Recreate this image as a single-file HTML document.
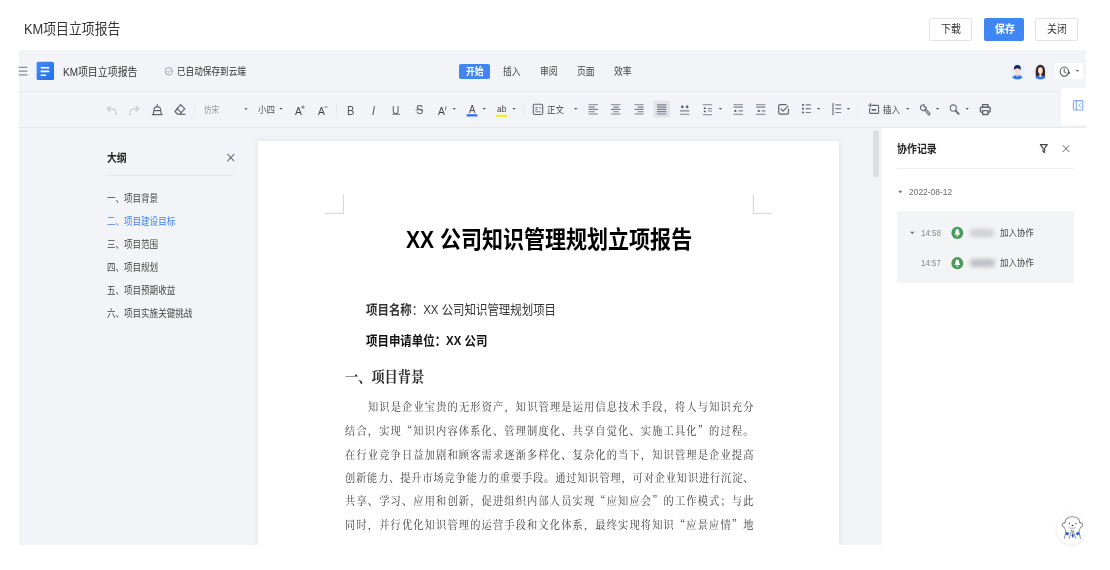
<!DOCTYPE html>
<html lang="zh-CN"><head><meta charset="utf-8"><title>KM项目立项报告</title>
<style>
html,body{margin:0;padding:0}
body{width:1110px;height:570px;position:relative;overflow:hidden;background:#fff;font-family:"Liberation Sans","Noto Sans CJK SC",sans-serif}
.a{position:absolute}
.t{position:absolute;white-space:nowrap;line-height:24px;height:24px;transform-origin:0 50%;transform:scaleX(0.88)}
svg.ic{position:absolute;left:0;top:0}
</style></head><body>
<div class="t" style="left:24.4px;top:17.0px;font-size:14.6px;color:#333;">KM项目立项报告</div>
<div class="a" style="left:929.1px;top:18px;width:43.3px;height:22.8px;background:#fff;border:1px solid #e1e3e6;box-sizing:border-box;border-radius:2px;"></div>
<div class="t" style="left:941.2px;top:17.3px;font-size:11.3px;color:#333;">下载</div>
<div class="a" style="left:983.5px;top:18px;width:40.9px;height:22.8px;background:#3f86f2;border-radius:2px;"></div>
<div class="t" style="left:994.5px;top:17.3px;font-size:11.3px;color:#fff;font-weight:700;">保存</div>
<div class="a" style="left:1035.2px;top:18px;width:43.1px;height:22.8px;background:#fff;border:1px solid #e1e3e6;box-sizing:border-box;border-radius:2px;"></div>
<div class="t" style="left:1047.2px;top:17.3px;font-size:11.3px;color:#333;">关闭</div>
<div class="a" style="left:19px;top:50px;width:1066.6px;height:495.0px;background:#f3f4f7;"></div>
<div class="a" style="left:19px;top:91px;width:1066.6px;height:1.0px;background:#e9eaee;"></div>
<div class="a" style="left:19px;top:126.7px;width:1066.6px;height:1.0px;background:#e8e9ed;"></div>
<div class="t" style="left:62.5px;top:59.7px;font-size:11.3px;color:#333;">KM项目立项报告</div>
<div class="t" style="left:176.7px;top:59.7px;font-size:9.8px;color:#333;">已自动保存到云端</div>
<div class="a" style="left:458.8px;top:64px;width:31.6px;height:14.8px;background:#3f86f2;border-radius:2px;"></div>
<div class="t" style="left:466px;top:59.8px;font-size:10px;color:#fff;font-weight:700;">开始</div>
<div class="t" style="left:502.5px;top:59.8px;font-size:10px;color:#444;">插入</div>
<div class="t" style="left:540px;top:59.8px;font-size:10px;color:#444;">审阅</div>
<div class="t" style="left:576.8px;top:59.8px;font-size:10px;color:#444;">页面</div>
<div class="t" style="left:613.6px;top:59.8px;font-size:10px;color:#444;">效率</div>
<div class="a" style="left:1055.3px;top:62.9px;width:27.3px;height:16.4px;background:#fff;border-radius:2px;"></div>
<div class="a" style="left:1060.8px;top:88px;width:24.8px;height:37.4px;background:#fff;border-radius:3px 0 0 3px;"></div>
<div class="t" style="left:204px;top:98.0px;font-size:8.6px;color:#999;">仿宋</div>
<div class="t" style="left:257.7px;top:98.0px;font-size:9.6px;color:#555;">小四</div>
<div class="t" style="left:295px;top:98.7px;font-size:11.8px;color:#444;">A</div>
<div class="t" style="left:317.6px;top:98.7px;font-size:11.8px;color:#444;">A</div>
<div class="t" style="left:347px;top:98.7px;font-size:12.5px;color:#555;">B</div>
<div class="t" style="left:372.4px;top:98.7px;font-size:12.5px;color:#555;"><i>I</i></div>
<div class="t" style="left:392.2px;top:98.3px;font-size:11.5px;color:#555;">U</div>
<div class="t" style="left:415.5px;top:98.3px;font-size:12.5px;color:#555;">S</div>
<div class="t" style="left:437.5px;top:98.7px;font-size:11.8px;color:#444;">A</div>
<div class="t" style="left:468.6px;top:97.0px;font-size:11px;color:#444;">A</div>
<div class="t" style="left:496.8px;top:96.6px;font-size:9.5px;color:#444;">ab</div>
<div class="t" style="left:547.3px;top:98.0px;font-size:9.6px;color:#444;">正文</div>
<div class="t" style="left:882.9px;top:98.0px;font-size:9.6px;color:#444;">插入</div>
<div class="t" style="left:107px;top:145.8px;font-size:11.2px;color:#222;font-weight:700;">大纲</div>
<div class="a" style="left:107px;top:174.6px;width:127.0px;height:0.8px;background:#e7e8ec;"></div>
<div class="t" style="left:107px;top:187.4px;font-size:9.7px;color:#444;">一、项目背景</div>
<div class="t" style="left:107px;top:210.3px;font-size:9.7px;color:#3f7ff0;">二、项目建设目标</div>
<div class="t" style="left:107px;top:233.2px;font-size:9.7px;color:#444;">三、项目范围</div>
<div class="t" style="left:107px;top:256.1px;font-size:9.7px;color:#444;">四、项目规划</div>
<div class="t" style="left:107px;top:279.0px;font-size:9.7px;color:#444;">五、项目预期收益</div>
<div class="t" style="left:107px;top:301.9px;font-size:9.7px;color:#444;">六、项目实施关键挑战</div>
<div class="a" style="left:257.7px;top:140.9px;width:581.6px;height:404.1px;background:#fff;box-shadow:0 0 7px rgba(20,30,60,.09);clip-path:inset(-10px -10px 0 -10px);"></div>
<div class="a" style="left:873.4px;top:130.3px;width:5.3px;height:46.9px;background:#dddee1;border-radius:3px;"></div>
<div class="a" style="left:881.8px;top:127.7px;width:203.8px;height:417.3px;background:#fff;"></div>
<div class="a" style="left:882px;top:545px;width:203.6px;height:25.0px;background:#fff;"></div>
<div class="t" style="left:405.6px;top:228.3px;font-size:23.9px;color:#000;font-weight:700;">XX 公司知识管理规划立项报告</div>
<div class="t" style="left:366.2px;top:297.5px;font-size:13px;color:#333;"><b>项目名称</b>：XX 公司知识管理规划项目</div>
<div class="t" style="left:366.2px;top:329.2px;font-size:13px;color:#111;font-weight:700;">项目申请单位：XX 公司</div>
<div class="t" style="left:344.5px;top:365.0px;font-size:15px;color:#2e2e2e;font-weight:700;font-family:'Liberation Serif','Noto Serif CJK SC',serif;">一、项目背景</div>
<div class="t" style="left:367.5px;top:393.7px;font-size:11.6px;color:#3c3c3c;font-family:'Noto Serif CJK SC',serif;width:438.1px;text-align:justify;text-align-last:justify;font-feature-settings:"fwid";">知识是企业宝贵的无形资产，知识管理是运用信息技术手段，将人与知识充分</div>
<div class="t" style="left:344.6px;top:417.8px;font-size:11.6px;color:#3c3c3c;font-family:'Noto Serif CJK SC',serif;width:464.1px;text-align:justify;text-align-last:justify;font-feature-settings:"fwid";">结合，实现“知识内容体系化、管理制度化、共享自觉化、实施工具化”的过程。</div>
<div class="t" style="left:344.6px;top:441.5px;font-size:11.6px;color:#3c3c3c;font-family:'Noto Serif CJK SC',serif;width:464.1px;text-align:justify;text-align-last:justify;font-feature-settings:"fwid";">在行业竞争日益加剧和顾客需求逐渐多样化、复杂化的当下，知识管理是企业提高</div>
<div class="t" style="left:344.6px;top:464.9px;font-size:11.6px;color:#3c3c3c;font-family:'Noto Serif CJK SC',serif;width:464.1px;text-align:justify;text-align-last:justify;font-feature-settings:"fwid";">创新能力、提升市场竞争能力的重要手段。通过知识管理，可对企业知识进行沉淀、</div>
<div class="t" style="left:344.6px;top:488.4px;font-size:11.6px;color:#3c3c3c;font-family:'Noto Serif CJK SC',serif;width:464.1px;text-align:justify;text-align-last:justify;font-feature-settings:"fwid";">共享、学习、应用和创新，促进组织内部人员实现“应知应会”的工作模式；与此</div>
<div class="t" style="left:344.6px;top:512.0px;font-size:11.6px;color:#3c3c3c;font-family:'Noto Serif CJK SC',serif;width:464.1px;text-align:justify;text-align-last:justify;font-feature-settings:"fwid";">同时，并行优化知识管理的运营手段和文化体系，最终实现将知识“应景应情”地</div>
<div class="t" style="left:896.8px;top:136.7px;font-size:11.3px;color:#222;font-weight:700;">协作记录</div>
<div class="a" style="left:896.8px;top:168px;width:176.9px;height:0.8px;background:#ebecef;"></div>
<div class="t" style="left:908.8px;top:180.0px;font-size:9.6px;color:#6b6b6b;">2022-08-12</div>
<div class="a" style="left:896.8px;top:210.9px;width:176.9px;height:72.0px;background:#f3f4f6;"></div>
<div class="t" style="left:921.4px;top:221.0px;font-size:9px;color:#8a8a8a;">14:58</div>
<div class="t" style="left:921.4px;top:251.2px;font-size:9px;color:#8a8a8a;">14:57</div>
<div class="t" style="left:1000.4px;top:221.0px;font-size:9.6px;color:#444;">加入协作</div>
<div class="t" style="left:1000.4px;top:251.2px;font-size:9.6px;color:#444;">加入协作</div>
<div class="a" style="left:970px;top:229px;width:24px;height:8px;background:#cdd0d4;filter:blur(2px);border-radius:3px"></div>
<div class="a" style="left:970px;top:259.2px;width:25px;height:8px;background:#bcbfc4;filter:blur(2px);border-radius:3px"></div>
<svg class="ic" width="1110" height="570" viewBox="0 0 1110 570" fill="none" stroke-linecap="round" stroke-linejoin="round">
<path d="M19.2 67.3L27.0 67.3" stroke="#8a8e96" stroke-width="1.3"/>
<path d="M19.2 71.1L27.0 71.1" stroke="#8a8e96" stroke-width="1.3"/>
<path d="M19.2 74.9L27.0 74.9" stroke="#8a8e96" stroke-width="1.3"/>
<defs><linearGradient id="dg" x1="0" y1="0" x2="1" y2="1"><stop offset="0" stop-color="#3f8dfa"/><stop offset="1" stop-color="#1f6ff0"/></linearGradient></defs>
<rect x="36.6" y="61.7" width="17.4" height="18.3" rx="1.6" fill="url(#dg)" stroke="none" stroke-width="1"/>
<rect x="40.6" y="67.0" width="8.7" height="1.6" rx="0.5" fill="#fff" stroke="none" stroke-width="1"/>
<rect x="40.6" y="70.6" width="8.7" height="1.6" rx="0.5" fill="#fff" stroke="none" stroke-width="1"/>
<rect x="40.6" y="74.4" width="5.6" height="1.6" rx="0.5" fill="#fff" stroke="none" stroke-width="1"/>
<ellipse cx="168.7" cy="71.3" rx="3.6" ry="3.7" fill="none" stroke="#9fa3aa" stroke-width="1"/>
<path d="M167 71.400l1.300 1.300 2.200-2.600" stroke="#9fa3aa" stroke-width="1" fill="none" />
<path d="M110 106.4l-2.7 2.4 2.7 2.4M107.6 108.8h4.6a3.8 3.8 0 0 1 3.8 3.8v2.1" stroke="#c8cbd0" stroke-width="1.3" fill="none" />
<path d="M136 106.4l2.7 2.4-2.7 2.4M138.4 108.8h-4.6a3.8 3.8 0 0 0-3.8 3.8v2.1" stroke="#c8cbd0" stroke-width="1.3" fill="none" />
<path d="M157.3 104.5v2.3M154 110.6h6.600M152.400 114.600h9.800M153.300 114.400l.8-5.400q.3-2.200 2-2.200h2.400q1.700 0 2 2.200l.8 5.400" stroke="#62666d" stroke-width="1.2" fill="none" />
<path d="M180.6 104.6l4.2 4.3-5 5.2h-2.4l-2.4-2.6zM177 108.3l4.2 4.4M180.4 114.3h4.6" stroke="#62666d" stroke-width="1.2" fill="none" />
<path d="M194.6 104.3L194.6 115.6" stroke="#e6e8eb" stroke-width="1"/>
<path d="M244.4 108.2h3.2l-1.6 1.8z" fill="#4a4d52" stroke="none"/>
<path d="M279.4 108.0h3.2l-1.6 1.8z" fill="#4a4d52" stroke="none"/>
<path d="M303 105.8v2.6M301.7 107.1h2.6" stroke="#62666d" stroke-width="0.9" fill="none" />
<path d="M324.8 107.1h2.4" stroke="#62666d" stroke-width="0.9" fill="none" />
<path d="M336.7 104.3L336.7 115.6" stroke="#e6e8eb" stroke-width="1"/>
<path d="M393.0 114.2L399.5 114.2" stroke="#62666d" stroke-width="1"/>
<path d="M416.0 109.8L422.6 109.8" stroke="#62666d" stroke-width="0.9"/>
<path d="M446 106.6l-.5 3" stroke="#62666d" stroke-width="0.9" fill="none" />
<path d="M452.6 108.0h3.2l-1.6 1.8z" fill="#4a4d52" stroke="none"/>
<rect x="466.7" y="114.2" width="10.6" height="2.3" rx="0" fill="#3370ff" stroke="none" stroke-width="1"/>
<path d="M482.6 108.0h3.2l-1.6 1.8z" fill="#4a4d52" stroke="none"/>
<rect x="496.2" y="114.7" width="10.8" height="2.2" rx="0" fill="#f4f01a" stroke="none" stroke-width="1"/>
<path d="M512.5 108.0h3.2l-1.6 1.8z" fill="#4a4d52" stroke="none"/>
<path d="M523.6 104.3L523.6 115.6" stroke="#e6e8eb" stroke-width="1"/>
<rect x="533.3" y="104.3" width="9.4" height="10.2" rx="1.4" fill="none" stroke="#62666d" stroke-width="1.1"/>
<path d="M535.6 107.6h2M535.6 109.6h1.6M535.6 111.8h4.8M539.6 107.2l1.4 1.6" stroke="#62666d" stroke-width="0.9" fill="none" />
<path d="M574.2 108.0h3.2l-1.6 1.8z" fill="#4a4d52" stroke="none"/>
<path d="M589.0 104.8L597.6 104.8" stroke="#7d818a" stroke-width="1.1"/>
<path d="M589.0 107.1L594.4 107.1" stroke="#7d818a" stroke-width="1.1"/>
<path d="M589.0 109.4L597.6 109.4" stroke="#7d818a" stroke-width="1.1"/>
<path d="M589.0 111.7L594.4 111.7" stroke="#7d818a" stroke-width="1.1"/>
<path d="M589.0 114.0L597.6 114.0" stroke="#7d818a" stroke-width="1.1"/>
<path d="M611.5 104.8L620.0 104.8" stroke="#7d818a" stroke-width="1.1"/>
<path d="M613.8 107.1L618.3 107.1" stroke="#7d818a" stroke-width="1.1"/>
<path d="M611.5 109.4L620.0 109.4" stroke="#7d818a" stroke-width="1.1"/>
<path d="M613.8 111.7L618.3 111.7" stroke="#7d818a" stroke-width="1.1"/>
<path d="M611.5 114.0L620.0 114.0" stroke="#7d818a" stroke-width="1.1"/>
<path d="M635.0 104.8L643.2 104.8" stroke="#7d818a" stroke-width="1.1"/>
<path d="M638.1 107.1L643.2 107.1" stroke="#7d818a" stroke-width="1.1"/>
<path d="M635.0 109.4L643.2 109.4" stroke="#7d818a" stroke-width="1.1"/>
<path d="M638.1 111.7L643.2 111.7" stroke="#7d818a" stroke-width="1.1"/>
<path d="M635.0 114.0L643.2 114.0" stroke="#7d818a" stroke-width="1.1"/>
<rect x="653.4" y="100.4" width="16.7" height="17.2" rx="1" fill="#e2e4e9" stroke="none" stroke-width="1"/>
<path d="M657.5 104.8L666.0 104.8" stroke="#7d818a" stroke-width="1.2"/>
<path d="M657.5 107.1L666.0 107.1" stroke="#7d818a" stroke-width="1.2"/>
<path d="M657.5 109.4L666.0 109.4" stroke="#7d818a" stroke-width="1.2"/>
<path d="M657.5 111.7L666.0 111.7" stroke="#7d818a" stroke-width="1.2"/>
<path d="M657.5 114.0L666.0 114.0" stroke="#7d818a" stroke-width="1.2"/>
<ellipse cx="682.3" cy="106.7" rx="1.35" ry="1.5" fill="#62666d" stroke="none" stroke-width="1"/>
<ellipse cx="687.1" cy="106.7" rx="1.35" ry="1.5" fill="#62666d" stroke="none" stroke-width="1"/>
<path d="M680.4 110.9L688.9 110.9" stroke="#7d818a" stroke-width="1.1"/>
<path d="M680.4 114.2L688.9 114.2" stroke="#7d818a" stroke-width="1.1"/>
<path d="M703.3 104.8L711.6 104.8" stroke="#7d818a" stroke-width="1.1"/>
<path d="M703.3 114.8L711.6 114.8" stroke="#7d818a" stroke-width="1.1"/>
<path d="M708.3 108.6L711.6 108.6" stroke="#7d818a" stroke-width="1"/>
<path d="M708.3 111.0L711.6 111.0" stroke="#7d818a" stroke-width="1"/>
<path d="M703.4 108.9l1.4-2 1.4 2zM703.4 110.7l1.4 2 1.4-2z" fill="#4a4d52"/>
<path d="M718.8 108.0h3.2l-1.6 1.8z" fill="#4a4d52" stroke="none"/>
<path d="M734.0 104.8L742.5 104.8" stroke="#7d818a" stroke-width="1.1"/>
<path d="M734.0 107.1L742.5 107.1" stroke="#7d818a" stroke-width="1.1"/>
<path d="M734.0 114.2L742.5 114.2" stroke="#7d818a" stroke-width="1.1"/>
<ellipse cx="735.4" cy="110.9" rx="1.1" ry="1.2" fill="#62666d" stroke="none" stroke-width="1"/>
<path d="M738.9 110.9L742.5 110.9" stroke="#7d818a" stroke-width="1.1"/>
<path d="M756.5 104.8L765.0 104.8" stroke="#7d818a" stroke-width="1.1"/>
<path d="M756.5 107.1L765.0 107.1" stroke="#7d818a" stroke-width="1.1"/>
<path d="M756.5 114.2L765.0 114.2" stroke="#7d818a" stroke-width="1.1"/>
<ellipse cx="758.8" cy="110.9" rx="1.1" ry="1.2" fill="#62666d" stroke="none" stroke-width="1"/>
<path d="M761.9 110.9L765.0 110.9" stroke="#7d818a" stroke-width="1.1"/>
<path d="M786.2 104.6h-6.2q-1.3 0-1.3 1.3v6.9q0 1.3 1.3 1.3h7.2q1.3 0 1.3-1.3v-3.6" stroke="#62666d" stroke-width="1.2" fill="none" />
<path d="M781 108.8l2.1 2.3 4.9-4.9" stroke="#62666d" stroke-width="1.2" fill="none" />
<rect x="802.1" y="104.0" width="1.7" height="1.8" rx="0" fill="#4f5358" stroke="none" stroke-width="1"/>
<path d="M806.0 104.9L810.5 104.9" stroke="#7d818a" stroke-width="1.2"/>
<rect x="802.1" y="107.8" width="1.7" height="1.8" rx="0" fill="#4f5358" stroke="none" stroke-width="1"/>
<path d="M806.0 108.7L810.5 108.7" stroke="#7d818a" stroke-width="1.2"/>
<rect x="802.1" y="111.6" width="1.7" height="1.8" rx="0" fill="#4f5358" stroke="none" stroke-width="1"/>
<path d="M806.0 112.5L810.5 112.5" stroke="#7d818a" stroke-width="1.2"/>
<path d="M817.0 108.0h3.2l-1.6 1.8z" fill="#4a4d52" stroke="none"/>
<path d="M833.0 103.5L833.0 114.7" stroke="#62666d" stroke-width="1.1"/>
<path d="M835.8 104.9L840.7 104.9" stroke="#7d818a" stroke-width="1.2"/>
<path d="M835.8 108.7L840.7 108.7" stroke="#7d818a" stroke-width="1.2"/>
<path d="M835.8 112.5L840.7 112.5" stroke="#7d818a" stroke-width="1.2"/>
<path d="M846.8 108.0h3.2l-1.6 1.8z" fill="#4a4d52" stroke="none"/>
<path d="M857.9 104.3L857.9 115.6" stroke="#e6e8eb" stroke-width="1"/>
<path d="M872.6 105.4h5q1 0 1 1v6q0 1-1 1h-7q-1 0-1-1v-4.2" stroke="#62666d" stroke-width="1.1" fill="none" />
<path d="M870.4 103.4v3.6M868.6 105.2h3.6" stroke="#62666d" stroke-width="1" fill="none" />
<rect x="871.6" y="109.0" width="4.6" height="1.7" rx="0" fill="#62666d" stroke="none" stroke-width="1"/>
<path d="M906.1 107.9h3.2l-1.6 1.8z" fill="#4a4d52" stroke="none"/>
<path d="M924.2 104.9A2.9 2.9 0 1 0 926.2 107M924.2 104.9l-.3 1.800 1.700.6 .6-.3" stroke="#62666d" stroke-width="1.1" fill="none" />
<path d="M925.6 110.0L929.1 114.0" stroke="#62666d" stroke-width="2.8"/>
<path d="M925.8 110.2L929.0 113.9" stroke="#f3f4f7" stroke-width="0.9"/>
<path d="M936.0 107.9h3.2l-1.6 1.8z" fill="#4a4d52" stroke="none"/>
<ellipse cx="953.3" cy="108.1" rx="3.0" ry="3.2" fill="none" stroke="#6c7077" stroke-width="1.1"/>
<path d="M955.8 110.8L958.7 113.9" stroke="#62666d" stroke-width="1.8"/>
<path d="M965.6 107.9h3.2l-1.6 1.8z" fill="#4a4d52" stroke="none"/>
<path d="M982.600 107.2v-2.600h5.400v2.600M982.600 112.2h-1.100q-1.100 0-1.100-1.100v-2.700q0-1.100 1.100-1.100h7.600q1.100 0 1.100 1.100v2.700q0 1.100-1.100 1.100h-1.100M982.600 110.600h5.400v3.900h-5.400z" stroke="#62666d" stroke-width="1.4" fill="none" />
<rect x="1073.4" y="100.6" width="9.4" height="9.4" rx="1.2" fill="none" stroke="#7ea6f8" stroke-width="1.1"/>
<path d="M1076.3 100.6L1076.3 110.0" stroke="#7ea6f8" stroke-width="1.1"/>
<path d="M1080.6 103.6l-1.8 1.7 1.8 1.7" stroke="#7ea6f8" stroke-width="1" fill="none" />
<ellipse cx="1064.4" cy="71.6" rx="4.2" ry="4.6" fill="none" stroke="#555a60" stroke-width="1.1"/>
<path d="M1064.2 69v3l1.8 1" stroke="#555a60" stroke-width="1" fill="none" />
<path d="M1067.6 73.4l1.6.4.4-1.6" stroke="#555a60" stroke-width="0.9" fill="none" />
<path d="M1075.8 69.9h3.2l-1.6 1.8z" fill="#4a4d52" stroke="none"/>
<clipPath id="av1017"><ellipse cx="1017.4" cy="71.2" rx="7.6" ry="8.4"/></clipPath>
<g clip-path="url(#av1017)">
<ellipse cx="1017.4" cy="71.2" rx="7.6" ry="8.4" fill="#e9f1fe" stroke="none" stroke-width="1"/>
<ellipse cx="1017.4" cy="79.5" rx="6.1" ry="4.4" fill="#2f7bf5" stroke="none" stroke-width="1"/>
<rect x="1016.3" y="72.6" width="2.2" height="3.8" rx="0" fill="#f7cfbd" stroke="none" stroke-width="1"/>
<ellipse cx="1017.4" cy="70.5" rx="3.1" ry="3.6" fill="#fcdccd" stroke="none" stroke-width="1"/>
<path d="M1014.0 70.0q-.5-5 3.400-5t3.400 5q-1.200-1.700-3.400-1.700t-3.400 1.700z" fill="#1b2350"/>
</g>
<clipPath id="av1040"><ellipse cx="1040.4" cy="71.2" rx="7.6" ry="8.4"/></clipPath>
<g clip-path="url(#av1040)">
<ellipse cx="1040.4" cy="71.2" rx="7.6" ry="8.4" fill="#e9f1fe" stroke="none" stroke-width="1"/>
<path d="M1036.0 77.4q-.9-8.400.9-10.600 1.400-2 3.500-2t3.500 2q1.800 2.200.9 10.600z" fill="#3d2622"/>
<ellipse cx="1040.4" cy="79.5" rx="5.7" ry="4.3" fill="#2f7bf5" stroke="none" stroke-width="1"/>
<rect x="1039.5" y="72.8" width="1.8" height="4.2" rx="0" fill="#f9d6c6" stroke="none" stroke-width="1"/>
<ellipse cx="1040.4" cy="70.4" rx="2.3" ry="3.2" fill="#fde3d6" stroke="none" stroke-width="1"/>
</g>
<path d="M227.700 154.400l6.200 6.400M233.900 154.400l-6.200 6.400" stroke="#6a6d74" stroke-width="1.1" fill="none" />
<path d="M325.2 213.4h18.2v-18.7" stroke="#d3d4d8" stroke-width="1" fill="none" />
<path d="M771.6 213.4h-18.2v-18.7" stroke="#d3d4d8" stroke-width="1" fill="none" />
<path d="M1040.3 144.6h7l-2.7 3.6v4.2l-1.6-.8v-3.4z" stroke="#444" stroke-width="1.1" fill="none" />
<path d="M1063 145.4l6 6.4M1069 145.4l-6 6.4" stroke="#666" stroke-width="1" fill="none" />
<path d="M898.1 190.8h4.4l-2.2 2.5z" fill="#777" stroke="none"/>
<path d="M910.1 231.7h4.4l-2.2 2.5z" fill="#777" stroke="none"/>
<ellipse cx="957.3" cy="232.9" rx="5.9" ry="6.1" fill="#469b59" stroke="none" stroke-width="1"/>
<path d="M954.4 234.8q1-.9 1-3.1 0-2.6 1.9-2.6t1.9 2.6q0 2.2 1 3.1z" fill="#fff"/>
<ellipse cx="957.3" cy="236.0" rx=".9" ry=".8" fill="#fff"/>
<ellipse cx="957.3" cy="263.2" rx="5.9" ry="6.1" fill="#469b59" stroke="none" stroke-width="1"/>
<path d="M954.4 265.09999999999997q1-.9 1-3.1 0-2.6 1.9-2.6t1.9 2.6q0 2.2 1 3.1z" fill="#fff"/>
<ellipse cx="957.3" cy="266.3" rx=".9" ry=".8" fill="#fff"/>
<defs><filter id="bl" x="-30%" y="-30%" width="160%" height="160%"><feGaussianBlur stdDeviation="1.3"/></filter></defs>
<clipPath id="mc"><rect x="1040" y="500" width="45.6" height="60"/></clipPath>
<g clip-path="url(#mc)"><ellipse cx="1071" cy="529.2" rx="14.6" ry="16.4" fill="#e2e2e5" filter="url(#bl)"/></g>
<ellipse cx="1071.0" cy="528.7" rx="14.3" ry="16.1" fill="#fff" stroke="none" stroke-width="1"/>
<path d="M1064.900 523q.4-6.200 7.500-6.200 7.100 0 7.500 6.200" stroke="#8b8e93" stroke-width="1.1" fill="none" />
<path d="M1064.900 522.500q-2.500.1-2.700 2.400-.1 1.700 1.600 2.100M1079.900 522.500q2.500.1 2.700 2.400.1 1.700-1.600 2.100" stroke="#8b8e93" stroke-width="1.1" fill="none" />
<path d="M1063.900 527q2.100 2.600 1.900 5.200l-1.500 6.300M1080.900 527q-2.100 2.600-1.900 5.200l1.500 6.300" stroke="#8b8e93" stroke-width="1.0" fill="none" />
<path d="M1071.600 530.200l-2.500 8.300M1073.200 530.200l2.500 8.300M1072.400 531.500v4" stroke="#8b8e93" stroke-width="0.9" fill="none" />
<path d="M1066 531.800l3.300 1.300-1.400 2.300-2.400-.9zM1079 531.800l-3.300 1.300 1.400 2.300 2.400-.9zM1071.600 534.800l1.200-1.100 1.200 1.400-.7 2.300h-1.300z" fill="#2a5fd6"/>
<ellipse cx="1069.5" cy="523.6" rx="0.6" ry="0.75" fill="#333" stroke="none" stroke-width="1"/>
<ellipse cx="1075.9" cy="523.6" rx="0.6" ry="0.75" fill="#333" stroke="none" stroke-width="1"/>
<ellipse cx="1072.5" cy="525.4" rx="0.95" ry="0.7" fill="#1a1a1a" stroke="none" stroke-width="1"/>
<path d="M1069.800 527.800q1.300 1.200 2.700.2 1.400 1 2.700-.2" stroke="#8b8e93" stroke-width="0.8" fill="none" />
</svg>
</body></html>
